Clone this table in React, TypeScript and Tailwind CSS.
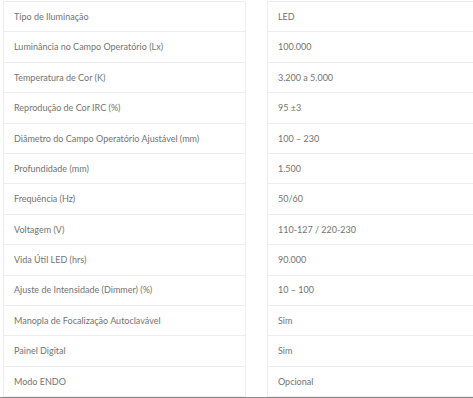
import React from "react";

const rows: [string, string][] = [
  ["Tipo de Iluminação", "LED"],
  ["Luminância no Campo Operatório (Lx)", "100.000"],
  ["Temperatura de Cor (K)", "3.200 a 5.000"],
  ["Reprodução de Cor IRC (%)", "95 ±3"],
  ["Diâmetro do Campo Operatório Ajustável (mm)", "100 – 230"],
  ["Profundidade (mm)", "1.500"],
  ["Frequência (Hz)", "50/60"],
  ["Voltagem (V)", "110-127 / 220-230"],
  ["Vida Útil LED (hrs)", "90.000"],
  ["Ajuste de Intensidade (Dimmer) (%)", "10 – 100"],
  ["Manopla de Focalização Autoclavável", "Sim"],
  ["Painel Digital", "Sim"],
  ["Modo ENDO", "Opcional"],
];

export default function App() {
  return (
    <div className="w-[473px] h-[398px] bg-white overflow-hidden flex flex-col" style={{ fontFamily: "Lato, 'Open Sans', sans-serif" }}>
      <div className="flex pt-[1px] pl-[3px]">
        <div className="w-[243px] border-l border-r border-t border-[#ededed]">
          {rows.map(([k], i) => (
            <div key={i} className="h-[30.4px] border-b border-[#ededed] flex items-center pl-[10px] text-[9px] text-[#737373]">
              {k}
            </div>
          ))}
        </div>
        <div className="w-[21px]" />
        <div className="flex-1 border-l border-t border-[#ededed]">
          {rows.map(([, v], i) => (
            <div key={i} className="h-[30.4px] border-b border-[#ededed] flex items-center pl-[10px] text-[9px] text-[#737373]">
              {v}
            </div>
          ))}
        </div>
      </div>
      <div className="flex-1" />
      <div className="h-[2px] bg-[#8a8a8a]" />
    </div>
  );
}
